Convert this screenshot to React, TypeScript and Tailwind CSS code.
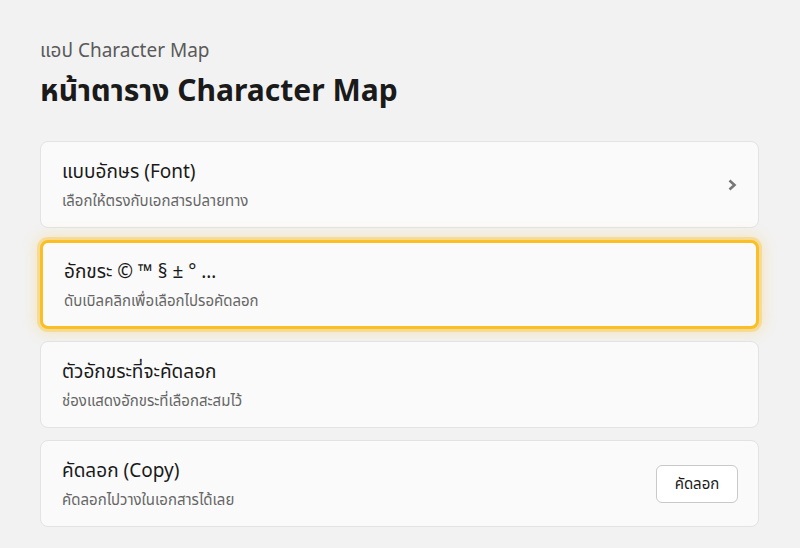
import React from 'react';

interface RowProps {
  title: string;
  desc: string;
  active?: boolean;
  right?: React.ReactNode;
}

function Row({ title, desc, active, right }: RowProps) {
  return (
    <div
      className={`flex items-center justify-between rounded-lg bg-[#fafafa] pl-[21px] pr-5 ${
        active
          ? 'h-[89px] border-[3px] border-[#fbbf24] pl-[19px] shadow-[0_0_0_3px_rgba(251,191,36,0.35),0_0_14px_4px_rgba(251,191,36,0.25)]'
          : 'h-[87px] border border-[#e3e3e3]'
      }`}
    >
      <div className="flex flex-col">
        <span className="text-[19px] leading-6 text-[#1a1a1a]">{title}</span>
        <span className="mt-[7px] text-[15px] leading-5 text-[#666]">{desc}</span>
      </div>
      {right}
    </div>
  );
}

export default function App() {
  return (
    <div
      className="min-h-[548px] w-full bg-[#f2f2f2] px-10 pt-[36px]"
      style={{ fontFamily: '"Noto Sans", "Noto Sans Thai", "Open Sans", sans-serif' }}
    >
      <div className="text-[19px] leading-7 text-[#5a5a5a]">แอป Character Map</div>
      <h1 className="mt-[8px] text-[30px] font-bold leading-9 text-[#1a1a1a]">
        หน้าตาราง Character Map
      </h1>

      <div className="mt-[33px] flex flex-col gap-3 pr-[1px]">
        <Row
          title="แบบอักษร (Font)"
          desc="เลือกให้ตรงกับเอกสารปลายทาง"
          right={
            <svg width="12" height="12" viewBox="0 0 12 12" className="text-[#777]">
              <path d="M3.5 1.5 L8.5 6 L3.5 10.5" fill="none" stroke="currentColor" strokeWidth="2.6" strokeLinejoin="miter" />
            </svg>
          }
        />
        <Row title="อักขระ © ™ § ± ° …" desc="ดับเบิลคลิกเพื่อเลือกไปรอคัดลอก" active />
        <Row title="ตัวอักขระที่จะคัดลอก" desc="ช่องแสดงอักขระที่เลือกสะสมไว้" />
        <Row
          title="คัดลอก (Copy)"
          desc="คัดลอกไปวางในเอกสารได้เลย"
          right={
            <button className="h-[38px] w-[82px] rounded-md border border-[#c9c9c9] bg-white text-[15px] text-[#1a1a1a]">
              คัดลอก
            </button>
          }
        />
      </div>
    </div>
  );
}
